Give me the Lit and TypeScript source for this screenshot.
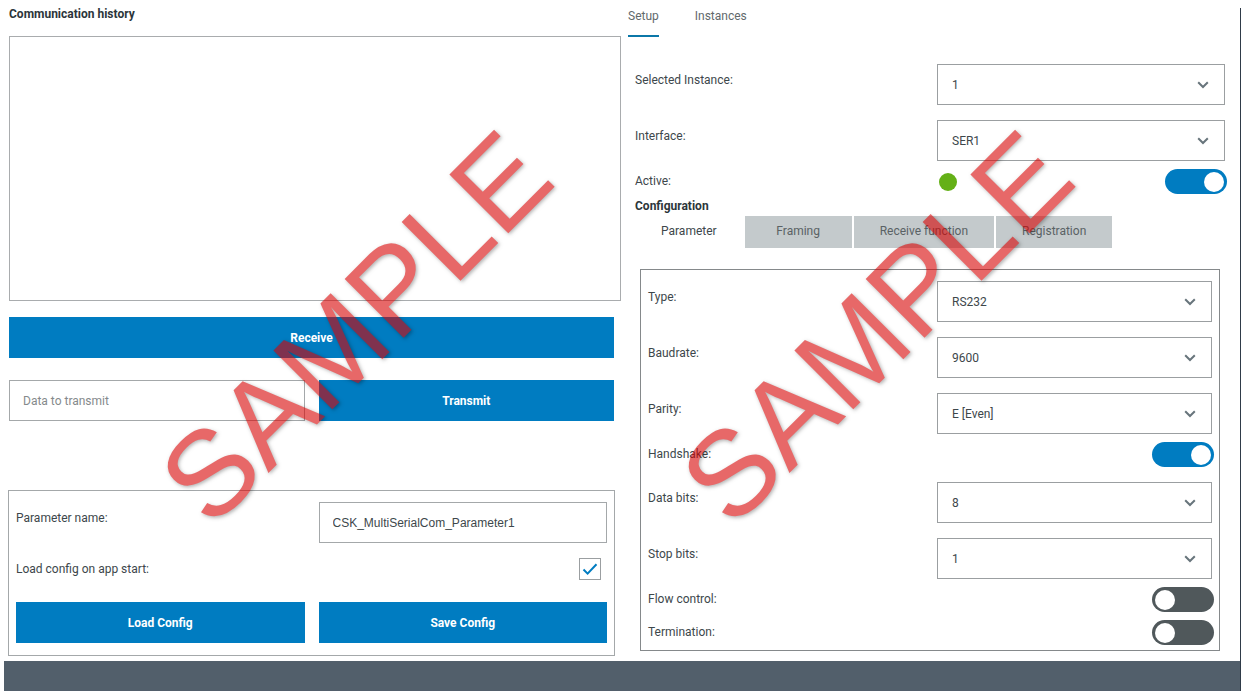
import { LitElement, html, css } from "lit";
import { customElement, property, state } from "lit/decorators.js";

const base = css`
  * {
    box-sizing: border-box;
  }
  button,
  input,
  select,
  textarea {
    margin: 0;
    font-family: inherit;
    font-size: inherit;
    color: inherit;
  }
`;

@customElement("select-row")
class SelectRow extends LitElement {
  static styles = [
    base,
    css`
      :host {
        display: grid;
        grid-template-columns: 1fr 1fr;
        column-gap: 14px;
        padding: 7px 0 8px;
      }
      .label {
        padding-top: 6px;
        line-height: 20px;
      }
      .field {
        position: relative;
      }
      .select {
        display: block;
        width: 100%;
        height: 41px;
        padding: 0 40px 0 14px;
        border: 1px solid #9b9fa1;
        border-radius: 0;
        background: #fff;
        appearance: none;
      }
      .chevron {
        position: absolute;
        right: 16px;
        top: 17px;
        pointer-events: none;
      }
    `,
  ];

  @property() label = "";
  @property({ attribute: false }) options: string[] = [];

  render() {
    return html`
      <label class="label" for="field">${this.label}</label>
      <div class="field">
        <select class="select" id="field">
          ${this.options.map((o) => html`<option>${o}</option>`)}
        </select>
        <svg class="chevron" width="12" height="8" viewBox="0 0 12 8" fill="none" stroke="#68757c" stroke-width="2">
          <path d="M1.2 1.2 6 6l4.800-4.800" />
        </svg>
      </div>
    `;
  }
}

@customElement("toggle-row")
class ToggleRow extends LitElement {
  static styles = [
    base,
    css`
      :host {
        display: grid;
        grid-template-columns: 1fr 1fr;
        column-gap: 14px;
        align-items: center;
      }
      .label {
        padding-bottom: 2px;
        line-height: 20px;
      }
      .field {
        display: flex;
        align-items: center;
        justify-content: flex-end;
        margin-right: -2px;
      }
      .lamp {
        width: 18px;
        height: 18px;
        margin-left: 2px;
        margin-right: auto;
        border-radius: 50%;
        background: #64b017;
      }
      .toggle {
        display: flex;
        align-items: center;
        width: 62px;
        height: 25px;
        padding: 0 3px;
        border-radius: 13px;
        background: #50585b;
        appearance: none;
      }
      .toggle::before {
        content: "";
        width: 20px;
        height: 20px;
        border-radius: 50%;
        background: #fff;
      }
      .toggle:checked {
        justify-content: flex-end;
        background: #007cc1;
      }
    `,
  ];

  @property() label = "";
  @property({ type: Boolean }) on = false;
  @property({ type: Boolean }) lamp = false;

  render() {
    return html`
      <label class="label" for="field">${this.label}</label>
      <div class="field">
        ${this.lamp ? html`<span class="lamp"></span>` : null}
        <input class="toggle" id="field" type="checkbox" role="switch" .checked=${this.on} />
      </div>
    `;
  }
}

@customElement("app-root")
class AppRoot extends LitElement {
  static styles = [
    base,
    css`
      :host {
        display: block;
        position: relative;
        overflow: hidden;
        background: #fff;
        color: #3d474b;
        font-family: Roboto, "Liberation Sans", sans-serif;
        font-size: 12px;
      }
      .page {
        display: flow-root;
        margin-top: 8px;
        padding-left: 4px;
        border-right: 1px solid #2f3b49;
      }
      .main {
        display: grid;
        grid-template-columns: 1fr 1fr;
        align-items: start;
        margin-top: -8px;
      }
      .left {
        padding: 4px 8px 5px 5px;
      }
      .heading {
        display: block;
        color: #2c353a;
        font-weight: 700;
        line-height: 20px;
      }
      .history {
        display: block;
        width: calc(100% + 7px);
        height: 265px;
        margin: 12px 0 16px;
        padding: 8px;
        border: 1px solid #a9acae;
        background: #fff;
        resize: none;
      }
      .button {
        display: block;
        width: 100%;
        height: 41px;
        padding: 0;
        border: 0;
        background: #007cc1;
        color: #fff;
        font-weight: 700;
      }
      .pair {
        display: grid;
        grid-template-columns: 1fr 1fr;
        column-gap: 14px;
      }
      .send {
        margin-top: 22px;
      }
      .input {
        display: block;
        width: 100%;
        height: 41px;
        padding: 0 13px;
        border: 1px solid #a4a8aa;
        border-radius: 0;
        background: #fff;
      }
      .input::placeholder {
        color: #858a8c;
        opacity: 1;
      }
      .name {
        font-family: "Liberation Sans", Arial, sans-serif;
      }
      .store {
        margin: 69px -1px 0;
        padding: 11px 7px 12px;
        border: 1px solid #a4a8aa;
      }
      .label {
        line-height: 20px;
      }
      .store-label {
        padding-top: 6px;
      }
      .autoload {
        display: flex;
        align-items: center;
        justify-content: space-between;
        margin: 15px 6px 22px 0;
      }
      .check {
        display: grid;
        place-items: center;
      }
      .check > * {
        grid-area: 1 / 1;
      }
      .box {
        width: 22px;
        height: 22px;
        border: 1px solid #9b9fa1;
        background: #fff;
        appearance: none;
      }
      .tick {
        visibility: hidden;
        pointer-events: none;
      }
      .box:checked + .tick {
        visibility: visible;
      }
      .tabs {
        display: flex;
        gap: 36px;
        padding-left: 6px;
      }
      .tab {
        height: 37px;
        padding: 0 0 3px;
        border: 0;
        border-bottom: 2px solid transparent;
        background: none;
        color: #62696c;
      }
      .tab[aria-selected="true"] {
        border-color: #0b77a8;
      }
      .setup {
        padding: 20px 15px 0 13px;
      }
      .config {
        margin-top: 2px;
      }
      .subtabs {
        display: flex;
        gap: 2px;
      }
      .subtab {
        min-width: 107px;
        height: 32px;
        padding: 0 26px 2px;
        border: 0;
        background: #c4cacc;
        color: #5a6265;
      }
      .subtab[aria-selected="true"] {
        background: none;
        color: #3d474b;
      }
      .parameters {
        display: grid;
        margin: 21px 5px 0;
        padding: 4px 7px 5px;
        border: 1px solid #85898b;
      }
      .spaced {
        margin-bottom: 8px;
      }
      .footer {
        height: 30px;
        background: #525f6b;
      }
      .marks {
        position: absolute;
        inset: 0;
        pointer-events: none;
      }
      .mark {
        position: absolute;
        top: 327px;
        transform: translate(-50%, -50%) rotate(-45deg);
        color: #d80000;
        opacity: 0.59;
        font-family: "Liberation Sans", Arial, sans-serif;
        font-size: 121px;
        line-height: 120px;
        font-kerning: none;
        text-shadow: 0 2px 4px rgba(0, 0, 0, 0.5);
      }
      .mark-left {
        left: 28.6%;
      }
      .mark-right {
        left: 70.6%;
      }
    `,
  ];

  @state() private tab = "Setup";
  @state() private subtab = "Parameter";

  render() {
    return html`
      <div class="page">
        <main class="main">
          <section class="left">
            <label class="heading" for="history">Communication history</label>
            <textarea class="history" id="history" readonly></textarea>
            <button class="button">Receive</button>
            <div class="pair send">
              <input class="input" type="text" aria-label="Data to transmit" placeholder="Data to transmit" />
              <button class="button">Transmit</button>
            </div>
            <div class="store">
              <div class="pair">
                <label class="label store-label" for="name">Parameter name:</label>
                <input class="input name" id="name" type="text" value="CSK_MultiSerialCom_Parameter1" />
              </div>
              <div class="autoload">
                <label class="label" for="autoload">Load config on app start:</label>
                <span class="check">
                  <input class="box" id="autoload" type="checkbox" checked />
                  <svg class="tick" width="16" height="14" viewBox="0 0 16 14" fill="none" stroke="#007cc1" stroke-width="2">
                    <path d="M1.500 7.500 5.600 11.600 14.500 2.200" />
                  </svg>
                </span>
              </div>
              <div class="pair">
                <button class="button">Load Config</button>
                <button class="button">Save Config</button>
              </div>
            </div>
          </section>
          <section>
            <div class="tabs" role="tablist">
              ${["Setup", "Instances"].map(
                (t) => html`<button
                  class="tab"
                  role="tab"
                  aria-selected=${this.tab === t ? "true" : "false"}
                  @click=${() => (this.tab = t)}
                >${t}</button>`
              )}
            </div>
            <div class="setup">
              <select-row label="Selected Instance:" .options=${["1", "2"]}></select-row>
              <select-row label="Interface:" .options=${["SER1", "SER2"]}></select-row>
              <toggle-row label="Active:" on lamp></toggle-row>
              <div class="heading config">Configuration</div>
              <div class="subtabs" role="tablist">
                ${["Parameter", "Framing", "Receive function", "Registration"].map(
                  (t) => html`<button
                    class="subtab"
                    role="tab"
                    aria-selected=${this.subtab === t ? "true" : "false"}
                    @click=${() => (this.subtab = t)}
                  >${t}</button>`
                )}
              </div>
              <div class="parameters">
                <select-row label="Type:" .options=${["RS232", "RS422", "RS485"]}></select-row>
                <select-row label="Baudrate:" .options=${["9600", "19200", "115200"]}></select-row>
                <select-row label="Parity:" .options=${["E [Even]", "O [Odd]", "N [None]"]}></select-row>
                <toggle-row class="spaced" label="Handshake:" on></toggle-row>
                <select-row label="Data bits:" .options=${["8", "7"]}></select-row>
                <select-row label="Stop bits:" .options=${["1", "2"]}></select-row>
                <toggle-row class="spaced" label="Flow control:"></toggle-row>
                <toggle-row label="Termination:"></toggle-row>
              </div>
            </div>
          </section>
        </main>
        <footer class="footer"></footer>
      </div>
      <div class="marks" aria-hidden="true">
        <span class="mark mark-left">SAMPLE</span>
        <span class="mark mark-right">SAMPLE</span>
      </div>
    `;
  }
}
